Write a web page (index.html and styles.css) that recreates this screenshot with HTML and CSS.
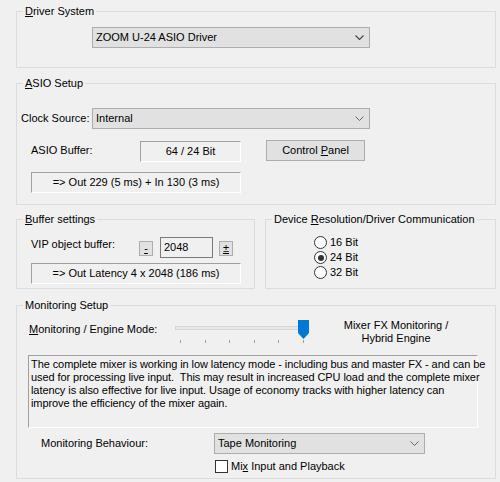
FILE: index.html
```html
<!DOCTYPE html>
<html>
<head>
<meta charset="utf-8">
<link rel="stylesheet" href="styles.css">
</head>
<body>
<div class="dialog">
  <fieldset class="group g-driver">
    <legend><u>D</u>river System</legend>
    <div class="combo combo-driver">
      <span>ZOOM U-24 ASIO Driver</span>
      <svg class="chev" width="9" height="5" viewBox="0 0 9 5"><polyline points="0.5,0.5 4.5,4.5 8.5,0.5" fill="none" stroke="#444" stroke-width="1.1"/></svg>
    </div>
  </fieldset>

  <fieldset class="group g-asio">
    <legend><u>A</u>SIO Setup</legend>
    <div class="row clock-row">
      <span class="lbl clock-lbl">Clock Source:</span>
      <div class="combo combo-clock">
        <span>Internal</span>
        <svg class="chev" width="9" height="5" viewBox="0 0 9 5"><polyline points="0.5,0.5 4.5,4.5 8.5,0.5" fill="none" stroke="#666" stroke-width="1"/></svg>
      </div>
    </div>
    <div class="row buffer-row">
      <span class="lbl buf-lbl">ASIO Buffer:</span>
      <div class="static buf-val">64 / 24 Bit</div>
      <button class="btn cp-btn"><span>Control <u>P</u>anel</span></button>
    </div>
    <div class="static info">=&gt; Out 229 (5 ms) + In 130 (3 ms)</div>
  </fieldset>

  <div class="pair">
    <fieldset class="group g-buffer">
      <legend><u>B</u>uffer settings</legend>
      <div class="row vip-row">
        <span class="lbl vip-lbl">VIP object buffer:</span>
        <button class="btn small"><u>-</u></button>
        <div class="edit">2048</div>
        <button class="btn small"><u>±</u></button>
      </div>
      <div class="static info info2">=&gt; Out Latency 4 x 2048 (186 ms)</div>
    </fieldset>
    <fieldset class="group g-res">
      <legend>Device <u>R</u>esolution/Driver Communication</legend>
      <div class="radios">
        <div class="radio r1"><span class="dot"></span><span>16 Bit</span></div>
        <div class="radio r2"><span class="dot on"></span><span>24 Bit</span></div>
        <div class="radio r3"><span class="dot"></span><span>32 Bit</span></div>
      </div>
    </fieldset>
  </div>

  <fieldset class="group g-mon">
    <legend>Monitoring Setup</legend>
    <div class="row mode-row">
      <span class="lbl mode-lbl"><u>M</u>onitoring / Engine Mode:</span>
      <div class="slider">
        <div class="track"></div>
        <svg class="thumb" width="11" height="19" viewBox="0 0 11 19"><polygon points="0,0 11,0 11,13 5.5,19 0,13" fill="#0078d7"/></svg>
        <div class="ticks"><i></i><i></i><i></i><i></i><i></i><i></i></div>
      </div>
      <div class="mode-val">Mixer FX Monitoring /<br>Hybrid Engine</div>
    </div>
    <div class="desc">The complete mixer is working in low latency mode - including bus and master FX - and can be<br>used for processing live input.&nbsp; This may result in increased CPU load and the complete mixer<br>latency is also effective for live input. Usage of economy tracks with higher latency can<br>improve the efficiency of the mixer again.</div>
    <div class="row beh-row">
      <span class="lbl beh-lbl">Monitoring Behaviour:</span>
      <div class="combo combo-beh">
        <span>Tape Monitoring</span>
        <svg class="chev" width="9" height="5" viewBox="0 0 9 5"><polyline points="0.5,0.5 4.5,4.5 8.5,0.5" fill="none" stroke="#666" stroke-width="1"/></svg>
      </div>
    </div>
    <div class="row check-row">
      <span class="box"></span>
      <span>Mi<u>x</u> Input and Playback</span>
    </div>
  </fieldset>
</div>
</body>
</html>
```

FILE: styles.css
```css
html, body {
  margin: 0;
  padding: 0;
  background: #f0f0f0;
}
body {
  font-family: "Liberation Sans", Arial, sans-serif;
  font-size: 11px;
  line-height: 13px;
  color: #000;
  width: 500px;
  height: 482px;
  overflow: hidden;
}
u { text-decoration: underline; text-underline-offset: 1px; }

.dialog {
  padding: 5px 0 0 16px;
  width: 480px;
  display: flex;
  flex-direction: column;
}

.group {
  margin: 0;
  padding: 0;
  border: 1px solid #dcdcdc;
  min-width: 0;
}
legend {
  margin-left: 6px;
  padding: 0 2px;
  line-height: 13px;
  font-size: 11px;
}

.row { display: flex; align-items: center; }
.lbl { white-space: nowrap; }

.combo {
  box-sizing: border-box;
  height: 21px;
  background: #e1e1e1;
  border: 1px solid #adadad;
  display: flex;
  align-items: center;
  justify-content: space-between;
  padding: 0 5px 0 3px;
}
.chev { display: block; }

.static {
  box-sizing: border-box;
  height: 21px;
  border-style: solid;
  border-width: 1px;
  border-color: #a0a0a0 #fff #fff #a0a0a0;
  display: flex;
  align-items: center;
  justify-content: center;
}

.btn {
  box-sizing: border-box;
  margin: 0;
  padding: 0;
  font: inherit;
  color: #000;
  background: #e1e1e1;
  border: 1px solid #adadad;
  display: flex;
  align-items: center;
  justify-content: center;
}

/* Driver System */
.g-driver { padding: 9px 0 19px 0; }
.combo-driver { margin-left: 75px; width: 278px; }

/* ASIO */
.g-asio { margin-top: 9px; padding: 18px 0 11px 0; }
.clock-row { height: 21px; }
.clock-lbl { margin-left: 4px; width: 71px; }
.combo-clock { width: 278px; }
.buffer-row { height: 22px; margin-top: 11px; align-items: flex-start; }
.buf-lbl { margin-left: 14px; width: 109px; margin-top: 4px; }
.buf-val { margin-top: 1px; width: 101px; }
.cp-btn { width: 99px; height: 21px; margin-left: 25px; }
.info { width: 210px; margin-left: 14px; margin-top: 10px; }

/* pair */
.pair { display: flex; margin-top: 8px; gap: 10px; }
.g-buffer { width: 239px; box-sizing: border-box; padding: 11px 0 4px 0; }
.g-res { width: 231px; box-sizing: border-box; padding: 8px 0 8px 0; }
.vip-row { height: 21px; align-items: flex-start; }
.vip-lbl { margin-left: 14px; width: 108px; margin-top: 1px; }
.small { width: 14px; height: 15px; margin-top: 4px; }
.edit {
  box-sizing: border-box;
  width: 53px;
  height: 21px;
  margin: 0 6px 0 7px;
  border: 1px solid #7a7a7a;
  padding-left: 3px;
  display: flex;
  align-items: center;
}
.info2 { margin-top: 5px; }

.radios { margin-left: 48px; display: flex; flex-direction: column; }
.radio { display: flex; align-items: center; height: 15px; }
.radio.r1 { height: 16px; }
.dot {
  box-sizing: border-box;
  width: 13px;
  height: 13px;
  border: 1px solid #333;
  border-radius: 50%;
  background: #fff;
  margin-right: 3px;
  position: relative;
}
.dot.on::after {
  content: "";
  position: absolute;
  left: 2.5px;
  top: 2.5px;
  width: 6px;
  height: 6px;
  border-radius: 50%;
  background: #333;
}

/* Monitoring */
.g-mon { margin-top: 10px; padding: 6px 0 5px 0; }
.mode-row { height: 28px; align-items: flex-start; }
.mode-lbl { margin-left: 12px; width: 146px; margin-top: 5px; }
.slider { position: relative; width: 140px; height: 28px; }
.track {
  position: absolute;
  left: 0;
  top: 8px;
  width: 132px;
  height: 4px;
  box-sizing: border-box;
  border: 1px solid #d6d6d6;
  background: #e7e7e7;
}
.thumb { position: absolute; left: 123px; top: 2px; }
.ticks {
  position: absolute;
  left: 5px;
  top: 22px;
  width: 124px;
  display: flex;
  justify-content: space-between;
}
.ticks i { display: block; width: 1px; height: 3px; background: #a0a0a0; }
.mode-val { width: 118px; margin-left: 22px; text-align: center; margin-top: 1px; }

.desc {
  box-sizing: border-box;
  margin: 9px 0 0 11px;
  width: 450px;
  height: 73px;
  border-style: solid;
  border-width: 1px;
  border-color: #a0a0a0 #fff #fff #a0a0a0;
  padding: 2px 0 0 2px;
  white-space: nowrap;
  letter-spacing: -0.08px;
}

.beh-row { height: 21px; margin-top: 5px; }
.beh-lbl { margin-left: 24px; width: 173px; }
.combo-beh { width: 211px; }
.check-row { height: 14px; margin-top: 5px; }
.box {
  box-sizing: border-box;
  width: 13px;
  height: 13px;
  border: 1px solid #333;
  background: #fff;
  margin-left: 198px;
  margin-right: 3px;
}
```
